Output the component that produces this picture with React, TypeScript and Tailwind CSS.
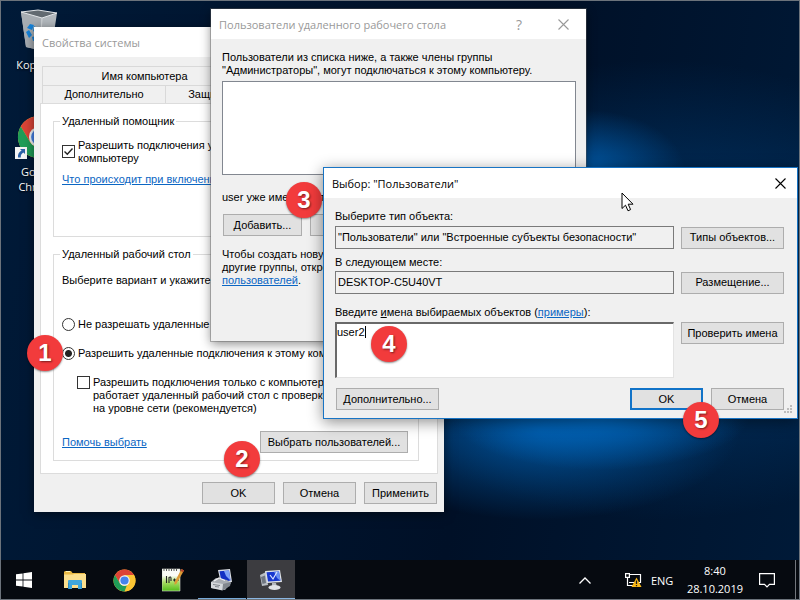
import React, { useState } from "react";

type ButtonProps = {
  children: React.ReactNode;
  className?: string;
  primary?: boolean;
};

function PushButton({ children, className = "", primary = false }: ButtonProps) {
  const edge = primary ? "border-2 border-[#1173c8]" : "border border-[#adadad]";
  return (
    <button
      type="button"
      className={`flex h-[22px] shrink-0 items-center justify-center whitespace-nowrap bg-[#e1e1e1] ${edge} ${className}`}
    >
      {children}
    </button>
  );
}

function CloseIcon() {
  return (
    <svg viewBox="0 0 11 11" className="size-[11px]" fill="none" stroke="currentColor" strokeWidth="1.1">
      <path d="M.5 .5 10.5 10.5M10.5 .5 .5 10.5" />
    </svg>
  );
}

function StepBadge({ n, className }: { n: number; className: string }) {
  return (
    <span
      className={`absolute flex size-9 items-center justify-center rounded-full bg-[#f23b3c] text-2xl font-bold leading-none text-white shadow-[0_1px_2px_rgba(0,0,0,0.45)] [text-shadow:1px_1px_2px_rgba(0,0,0,0.5)] ${className}`}
    >
      {n}
    </span>
  );
}

function ChromeIcon({ className }: { className: string }) {
  return (
    <svg viewBox="0 0 48 48" className={className}>
      <circle cx="24" cy="24" r="23" fill="#fbc534" />
      <path d="M24 24 4.1 12.5A23 23 0 0 1 43.9 12.5H24z" fill="#dc4437" />
      <path d="M43.9 12.5A23 23 0 0 1 24 47L33.5 29.5 24 12.5z" fill="#fbc534" />
      <path d="M4.1 12.5 14.5 30 24 24V12.5z" fill="#dc4437" />
      <path d="M4.1 12.5 14.5 30A11 11 0 0 0 29 34L24 47A23 23 0 0 1 4.1 12.5z" fill="#1f9d58" />
      <circle cx="24" cy="24" r="11" fill="#f4f6f8" />
      <circle cx="24" cy="24" r="8.6" fill="#4583ec" />
    </svg>
  );
}

function RecycleBinIcon() {
  return (
    <svg viewBox="0 0 40 42" className="h-[42px] w-10">
      <path d="M2 3 7 38 20 41 33 37 38 4 22 8z" fill="#b3b9be" />
      <path d="M2 3 7 38 20 41 22 8z" fill="#a7adb3" />
      <path d="M2 3 19 1 38 4 23 9z" fill="#626a71" />
      <path d="M2 3 19 1 38 4 23 9z" fill="none" stroke="#e3e6e9" strokeWidth="1" />
      <path d="M23 9 21 41" stroke="#d3d7da" strokeWidth="1" />
      <path d="M8 19l3-4 4 1-2 5zM7 23l3-2 3 5-3 3zM13 28l4-1v4l-3 1z" fill="#1583dc" />
      <path d="M15 17l3 2-1 5-3-2z" fill="#1583dc" />
    </svg>
  );
}

function ShortcutArrow() {
  return (
    <svg viewBox="0 0 12 12" className="absolute -left-0.5 bottom-0 size-3">
      <path d="M0 0h12v12H0z" fill="#f5f5f5" />
      <path d="M5 2h5v5L8.4 5.4C6.5 6.5 5.6 8 5.8 10.4H3C2.600 7.500 4 5 6.600 3.600z" fill="#2c62a8" />
    </svg>
  );
}

function WindowsLogo() {
  return (
    <svg viewBox="0 0 16 16" className="size-4" fill="#fff">
      <path d="M0 2.300 6.600 1.400V7.600H0zM7.400 1.300 16 0V7.600H7.400zM0 8.400H6.600V14.600L0 13.700zM7.400 8.400H16V16L7.400 14.700z" />
    </svg>
  );
}

function ExplorerIcon() {
  return (
    <svg viewBox="0 0 22 20" className="h-5 w-[22px]">
      <path d="M0 2 1 1H7L8.500 3H21V18H0z" fill="#e9b945" />
      <path d="M2 1h4v1H2z" fill="#fff3b5" />
      <path d="M0 4.500 9 4.500 10 4H22V18H0z" fill="#fbdf8e" />
      <path d="M4 11Q4 10 5 10H17Q18 10 18 11V19H14V15H8V19H4z" fill="#3fa6dc" />
      <path d="M4 13h1v6H4zM17 13h1v6h-1z" fill="#2b8cc4" />
    </svg>
  );
}

function NotepadIcon() {
  return (
    <svg viewBox="0 0 22 24" className="h-6 w-[22px]">
      <defs>
        <linearGradient id="page" x1="0" y1="0" x2="0" y2="1">
          <stop offset="0.3" stopColor="#fafcf6" />
          <stop offset="0.6" stopColor="#a8dd62" />
          <stop offset="1" stopColor="#54bd1b" />
        </linearGradient>
      </defs>
      <path d="M0 1h18v22H0z" fill="url(#page)" stroke="#d6d9d2" strokeWidth=".6" />
      <path d="M2 1v2M4.500 1v2M7 1v2M9.500 1v2M12 1v2M14.500 1v2" stroke="#4a4a4a" strokeWidth=".9" />
      <path d="M4.500 8v7M7 15V9.500Q9 8 9 10.500V13M11 12h3M12.500 10.500v3M15 12h2" stroke="#252525" strokeWidth="1.100" fill="none" />
      <path d="M19.500 1 22 2.500 14.500 15.500 12.500 17 12.600 14z" fill="#dc9a35" />
      <path d="M19.500 1 22 2.500 21 4.300 18.500 2.800z" fill="#b9442d" />
    </svg>
  );
}

function SystemIcon() {
  return (
    <svg viewBox="0 0 24 24" className="size-6">
      <path d="M8 2 20 1 22 14 11 16z" fill="#d9dde3" />
      <path d="M9.500 3.300 19 2.500 20.500 12.500 11.500 14z" fill="#1431c4" />
      <path d="M14 3 19 2.500 20.500 12.500 16 8z" fill="#7fa2f6" />
      <path d="M1 14 6 10 17 12 21 15 15 22 1 20z" fill="#a9adb3" />
      <path d="M1 14 13 16 12.500 22.500 1 20z" fill="#d5d8dc" />
      <path d="M13 16 21 14 20 18 12.500 22.500z" fill="#82878e" />
      <path d="M3 16.500 10 17.500M5 18.500 9 19" stroke="#80858c" strokeWidth="1" />
      <path d="M4 13 9 10 15 12.500" stroke="#f2f3f5" strokeWidth="1.200" fill="none" />
    </svg>
  );
}

function RemoteIcon() {
  return (
    <svg viewBox="0 0 24 24" className="size-6">
      <path d="M1 7 7 4 9 17 3 18z" fill="#b8bdc4" />
      <path d="M2 9 6 7.500 7 15 3.500 16z" fill="#6f7680" />
      <path d="M6 3 21 2 23 14 8 15z" fill="#dfe3e8" />
      <path d="M7.500 4.200 20 3.400 21.500 12.700 9 13.500z" fill="#1737cf" />
      <path d="M15 3.700 20 3.400 21.500 12.700 18 10z" fill="#6a90f2" />
      <path d="M11 7 14 11 18 4" stroke="#dce5ff" strokeWidth="1.200" fill="none" />
      <path d="M13 15h4l1 4h-5z" fill="#b4b9c0" />
      <ellipse cx="15.500" cy="19.500" rx="6" ry="2.500" fill="#e0e3e7" />
    </svg>
  );
}

function NetworkIcon() {
  return (
    <svg viewBox="0 0 17 16" className="h-4 w-[17px]">
      <path d="M4 2.500H15.500V10.500H4M4.500 13.500H10M2.500 6V13.500H5" fill="none" stroke="#fff" strokeWidth="1.200" />
      <path d="M.6 1.600H4.400V5.400H.6z" fill="#05080d" stroke="#fff" strokeWidth="1.200" />
      <path d="M11.500 5.500 16.500 15H6.500z" fill="#fbb917" />
      <path d="M11.500 8.500V12M11.500 13V14.200" stroke="#1b1b1b" strokeWidth="1.300" />
    </svg>
  );
}

function Taskbar() {
  const task = "flex h-full w-12 items-center justify-center";
  return (
    <footer className="relative flex h-10 items-stretch bg-[#060a10] text-white">
      <button type="button" aria-label="Start" className={task}>
        <WindowsLogo />
      </button>
      <nav className="ml-[3px] flex gap-px">
        <button type="button" aria-label="Explorer" className={task}><ExplorerIcon /></button>
        <button type="button" aria-label="Chrome" className={task}><ChromeIcon className="size-[23px]" /></button>
        <button type="button" aria-label="Notepad++" className={task}><NotepadIcon /></button>
        <button type="button" aria-label="System" className={`${task} border-b-2 border-[#76a9d8] pt-0.5`}><SystemIcon /></button>
        <button type="button" aria-label="Remote" className={`${task} border-b-2 border-[#8ab6e2] bg-[#3c3c40] pt-0.5`}><RemoteIcon /></button>
      </nav>
      <div className="ml-auto flex items-center font-['Open_Sans',sans-serif] text-[11px]">
        <button type="button" aria-label="Hidden icons" className="mr-[34px]">
          <svg viewBox="0 0 12 7" className="h-[7px] w-3" fill="none" stroke="#fff" strokeWidth="1.300">
            <path d="M.5 6.500 6 1 11.500 6.500" />
          </svg>
        </button>
        <NetworkIcon />
        <span className="ml-[9px] w-6">ENG</span>
        <time className="ml-3 block text-center leading-[18px]">
          <span className="block">8:40</span>
          <span className="block">28.10.2019</span>
        </time>
        <button type="button" aria-label="Notifications" className="ml-4 mr-5">
          <svg viewBox="0 0 16 16" className="size-4" fill="none" stroke="#fff" strokeWidth="1.200">
            <path d="M.6 1.600H15.400V12.400H10.500L8 15 5.500 12.400H.6z" />
          </svg>
        </button>
      </div>
      <div className="w-[5px] border-l border-[#72767c]" />
    </footer>
  );
}

function SystemProperties() {
  const [mode, setMode] = useState("allow");
  const radio =
    "size-[13px] shrink-0 appearance-none rounded-full border border-[#333] bg-white checked:bg-[radial-gradient(circle,#222_0_3px,#fff_4px)]";
  return (
    <section className="absolute left-[34px] top-[27px] w-[410px] bg-[#f0f0f0] shadow-[0_2px_10px_rgba(0,0,0,0.5)]">
      <header className="flex h-[30px] items-center bg-white px-2 font-['Open_Sans',sans-serif] text-[11px] text-[#999]">
        Свойства системы
      </header>
      <div className="px-1.5 pb-2 pt-[9px]">
        <div role="tablist" className="mx-0.5 border-l border-t border-[#d9d9d9]">
          <button type="button" role="tab" className="block h-[18px] w-[203px] leading-[18px]">Имя компьютера</button>
          <div className="flex h-[18px] border-t border-[#d9d9d9]">
            <button type="button" role="tab" className="w-[123px] border-r border-[#d9d9d9]">Дополнительно</button>
            <button type="button" role="tab" className="w-[130px]">Защита системы</button>
          </div>
        </div>
        <div className="border border-[#dcdcdc] bg-white px-3 pb-3 pt-[11px]">
          <fieldset className="mr-1.5 h-[122px] border border-[#dcdcdc] px-2">
            <legend className="-ml-0.5 px-0.5 leading-[13px]">Удаленный помощник</legend>
            <label className="mt-[11px] flex items-start gap-[3px]">
              <span className="relative mt-1.5 size-[13px] shrink-0">
                <input type="checkbox" defaultChecked className="peer block size-[13px] appearance-none border border-[#333] bg-white" />
                <svg viewBox="0 0 13 13" className="pointer-events-none absolute inset-0 hidden size-[13px] peer-checked:block" fill="none" stroke="#222" strokeWidth="1.400">
                  <path d="M2.500 6.500 5.300 9.300 10.500 3.500" />
                </svg>
              </span>
              <span className="whitespace-nowrap">
                Разрешить подключения удаленного<br />компьютеру
              </span>
            </label>
            <a href="#help" className="mt-2 block whitespace-nowrap text-[#0b66c3] underline">
              Что происходит при включении
            </a>
          </fieldset>
          <fieldset className="mr-1.5 mt-[11px] border border-[#dcdcdc] px-2 pb-[7px]">
            <legend className="-ml-0.5 px-0.5 leading-[13px]">Удаленный рабочий стол</legend>
            <p className="mt-[13px] whitespace-nowrap">Выберите вариант и укажите</p>
            <label className="mt-[31px] flex items-center gap-[3px] whitespace-nowrap">
              <input type="radio" name="mode" checked={mode === "deny"} onChange={() => setMode("deny")} className={radio} />
              Не разрешать удаленные подключения
            </label>
            <label className="mt-4 flex items-center gap-[3px] whitespace-nowrap">
              <input type="radio" name="mode" checked={mode === "allow"} onChange={() => setMode("allow")} className={radio} />
              Разрешить удаленные подключения к этому компьютеру
            </label>
            <label className="ml-[15px] mt-4 flex items-start gap-[3px] whitespace-nowrap">
              <input type="checkbox" className="size-[13px] shrink-0 appearance-none border border-[#333] bg-white" />
              <span>
                Разрешить подключения только с компьютеров
                <br />работает удаленный рабочий стол с проверкой
                <br />на уровне сети (рекомендуется)
              </span>
            </label>
            <div className="mt-4 flex items-center justify-between pr-0.5">
              <a href="#choose" className="text-[#0b66c3] underline">Помочь выбрать</a>
              <PushButton className="w-[148px]">Выбрать пользователей...</PushButton>
            </div>
          </fieldset>
        </div>
        <div className="mr-px mt-2 flex justify-end gap-2">
          <PushButton className="w-[73px]">OK</PushButton>
          <PushButton className="w-[73px]">Отмена</PushButton>
          <PushButton className="w-[73px]">Применить</PushButton>
        </div>
      </div>
    </section>
  );
}

function RemoteUsers() {
  return (
    <section className="absolute left-[211px] top-[9px] w-[375px] bg-[#f0f0f0] shadow-[0_0_0_1px_rgba(90,90,90,0.4),0_3px_10px_rgba(0,0,0,0.45)]">
      <header className="flex h-[30px] items-center bg-white pl-2 pr-[17px] font-['Open_Sans',sans-serif] text-[11px] text-[#999]">
        <h2 className="grow">Пользователи удаленного рабочего стола</h2>
        <button type="button" aria-label="Help" className="mr-9 text-[14px]">?</button>
        <button type="button" aria-label="Close"><CloseIcon /></button>
      </header>
      <div className="px-[11px] pb-[54px] pt-3">
        <p className="whitespace-nowrap">
          Пользователи из списка ниже, а также члены группы
          <br />"Администраторы", могут подключаться к этому компьютеру.
        </p>
        <div role="listbox" className="mt-1 h-[94px] w-[354px] border border-[#828790] bg-white" />
        <p className="mt-4">user уже имеет доступ.</p>
        <div className="ml-px mt-2.5 flex gap-2">
          <PushButton className="w-[79px]">Добавить...</PushButton>
          <PushButton className="w-[79px]">{" "}</PushButton>
        </div>
        <p className="mt-3 whitespace-nowrap">
          Чтобы создать новую
          <br />другие группы, откройте
          <br /><a href="#users" className="text-[#0b66c3] underline">пользователей</a>.
        </p>
      </div>
    </section>
  );
}

function SelectUsers() {
  const field = "h-[23px] w-full min-w-0 border border-[#7a7a7a] bg-[#f0f0f0] px-0.5 pb-0.5 outline-none";
  return (
    <section className="absolute left-[323px] top-[167px] w-[475px] border border-[#1874c4] bg-[#f0f0f0] shadow-[0_3px_14px_rgba(0,0,0,0.45)]">
      <header className="flex h-[30px] items-center justify-between bg-white pl-2 pr-[11px] font-['Open_Sans',sans-serif] text-[11px] text-black">
        <h2>Выбор: "Пользователи"</h2>
        <button type="button" aria-label="Close"><CloseIcon /></button>
      </header>
      <div className="pb-2 pl-[11px] pr-[13px] pt-3">
        <label htmlFor="type" className="block">Выберите тип объекта:</label>
        <div className="mt-[3px] flex items-center gap-[7px]">
          <input id="type" readOnly className={field} defaultValue={'"Пользователи" или "Встроенные субъекты безопасности"'} />
          <PushButton className="w-[103px]">Типы объектов...</PushButton>
        </div>
        <label htmlFor="place" className="mt-[7px] block">В следующем месте:</label>
        <div className="mt-0.5 flex items-center gap-[7px]">
          <input id="place" readOnly className={field} defaultValue="DESKTOP-C5U40VT" />
          <PushButton className="w-[103px]">Размещение...</PushButton>
        </div>
        <label htmlFor="names" className="mt-3 block">
          Введите <u>и</u>мена выбираемых объектов (<a href="#examples" className="text-[#0b66c3] underline">примеры</a>):
        </label>
        <div className="mt-[3px] flex items-start gap-[7px]">
          <div className="relative grow">
            <textarea
              id="names"
              defaultValue="user2"
              className="block h-14 w-full resize-none border-b border-l-2 border-r border-t-2 border-[#696969] border-b-[#e3e3e3] border-r-[#e3e3e3] bg-white px-0 py-0.5 outline-none"
            />
            <span className="absolute left-[30px] top-1 h-3 w-px bg-black" />
          </div>
          <PushButton className="w-[103px]">Проверить имена</PushButton>
        </div>
        <div className="ml-px mt-2.5 flex gap-2">
          <PushButton className="mr-auto w-[103px]">Дополнительно...</PushButton>
          <PushButton primary className="w-[73px]">OK</PushButton>
          <PushButton className="w-[73px]">Отмена</PushButton>
        </div>
      </div>
      <svg viewBox="0 0 9 9" className="absolute bottom-1 right-1 size-[9px]" fill="#bcbcbc">
        <path d="M6 0h2v2H6zM3 3h2v2H3zM6 3h2v2H6zM0 6h2v2H0zM3 6h2v2H3zM6 6h2v2H6z" />
      </svg>
    </section>
  );
}

export default function App() {
  return (
    <main className="relative flex h-screen w-full flex-col overflow-hidden bg-[#001530] font-['Liberation_Sans',Arial,sans-serif] text-[11px] leading-[13px] text-black">
      <div className="absolute inset-0 bg-[radial-gradient(ellipse_100px_60px_at_585px_170px,rgba(0,100,185,0.8),transparent),radial-gradient(ellipse_150px_55px_at_600px_415px,rgba(0,112,205,0.8),transparent),radial-gradient(ellipse_200px_90px_at_540px_430px,rgba(0,94,175,0.8),transparent),radial-gradient(ellipse_340px_230px_at_660px_290px,rgba(0,72,138,0.75),transparent),linear-gradient(100deg,#001a38,#001027_60%,#001a38)]" />
      <div className="relative grow font-['Open_Sans',sans-serif] text-[11px] leading-[15px] text-white [text-shadow:0_1px_2px_#000]">
        <a href="#bin" className="absolute left-[5px] top-[9px] flex w-[68px] flex-col items-center gap-1.5">
          <RecycleBinIcon />
          Корзина
        </a>
        <a href="#chrome" className="absolute left-[5px] top-[115px] flex w-[68px] flex-col items-center">
          <span className="relative mb-[5px] block">
            <ChromeIcon className="size-11" />
            <ShortcutArrow />
          </span>
          <span>Google</span>
          <span>Chrome</span>
        </a>
      </div>
      <Taskbar />
      <SystemProperties />
      <RemoteUsers />
      <StepBadge n={1} className="left-[27px] top-[335px]" />
      <StepBadge n={3} className="left-[286px] top-[182px]" />
      <SelectUsers />
      <StepBadge n={2} className="left-[224px] top-[441px]" />
      <StepBadge n={4} className="left-[371px] top-[326px]" />
      <StepBadge n={5} className="left-[683px] top-[402px]" />
      <svg viewBox="0 0 13 20" className="absolute left-[621px] top-[192px] h-5 w-[13px]">
        <path d="M1 1V16.500L4.500 13.200 7 18.800 9.600 17.600 7.200 12.200H12z" fill="#fff" stroke="#000" strokeWidth="1" />
      </svg>
      <div className="pointer-events-none absolute inset-0 border border-[#6c737b]" />
    </main>
  );
}
